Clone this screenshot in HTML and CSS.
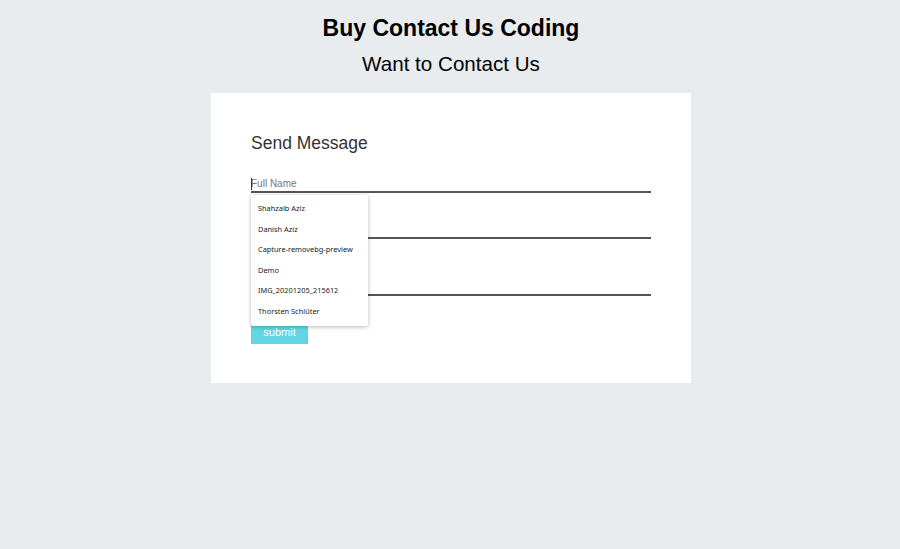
FILE: index.html
```html
<!DOCTYPE html>
<html lang="en">
<head>
<meta charset="utf-8">
<title>Buy Contact Us Coding</title>
<link rel="stylesheet" href="styles.css">
</head>
<body>
<header class="page-header">
  <h1 class="title">Buy Contact Us Coding</h1>
  <h2 class="subtitle">Want to Contact Us</h2>
</header>
<main class="card">
  <h3 class="card-title">Send Message</h3>
  <form class="form">
    <div class="field">
      <input class="input input-active" type="text" placeholder="Full Name">
      <span class="caret"></span>
      <ul class="autofill">
        <li>Shahzaib Aziz</li>
        <li>Danish Aziz</li>
        <li>Capture-removebg-preview</li>
        <li>Demo</li>
        <li>IMG_20201205_215612</li>
        <li>Thorsten Schlüter</li>
      </ul>
    </div>
    <input class="input" type="email" placeholder="Email">
    <textarea class="input textarea" placeholder="Message"></textarea>
    <button class="submit" type="button">submit</button>
  </form>
</main>
</body>
</html>
```
FILE: styles.css
```css
html, body {
  margin: 0;
  padding: 0;
}
body {
  background: #e9ecef;
  font-family: "Liberation Sans", Arial, sans-serif;
  color: #000;
  height: 549px;
  padding-left: 2px;
}
.page-header {
  padding-top: 15px;
  text-align: center;
}
.title {
  margin: 0;
  font-size: 23px;
  line-height: 26px;
  font-weight: bold;
}
.subtitle {
  margin: 11px 0 0;
  font-size: 20.6px;
  line-height: 24px;
  font-weight: normal;
}
.card {
  box-sizing: border-box;
  width: 480px;
  height: 290px;
  margin: 17px auto 0;
  background: #fff;
  padding: 40px 40px 40px;
}
.card-title {
  margin: 0;
  font-size: 17.5px;
  line-height: 20px;
  font-weight: normal;
  color: #333;
}
.form {
  display: flex;
  flex-direction: column;
  align-items: flex-start;
  margin-top: 20px;
}
.field {
  position: relative;
  width: 400px;
}
.input {
  box-sizing: border-box;
  display: block;
  width: 400px;
  height: 20px;
  border: none;
  border-bottom: 2px solid #555;
  padding: 2px 0 0;
  margin: 0;
  font-family: "Liberation Sans", Arial, sans-serif;
  font-size: 10px;
  color: #333;
  background: transparent;
  outline: none;
}
.input::placeholder {
  color: #777;
}
.form > .input {
  margin-top: 26px;
}
.textarea {
  height: 31px;
  resize: none;
}
.caret {
  position: absolute;
  left: 0;
  top: 5px;
  width: 1px;
  height: 12px;
  background: #333;
}
.autofill {
  position: absolute;
  left: 0;
  top: 22px;
  width: 117px;
  margin: 0;
  padding: 3px 0 4px;
  list-style: none;
  background: #fff;
  border-radius: 2px;
  box-shadow: 0 1px 4px rgba(0, 0, 0, 0.28);
  z-index: 2;
}
.autofill li {
  height: 20.6px;
  line-height: 20.6px;
  padding-left: 7px;
  font-family: "Noto Sans", "Open Sans", sans-serif;
  font-size: 7.4px;
  color: #222;
  white-space: nowrap;
}
.submit {
  margin-top: 23px;
  width: 57px;
  height: 25px;
  border: none;
  padding: 0;
  background: #62d5e5;
  color: #fff;
  font-family: "Liberation Sans", Arial, sans-serif;
  font-size: 11px;
  cursor: pointer;
}
```
